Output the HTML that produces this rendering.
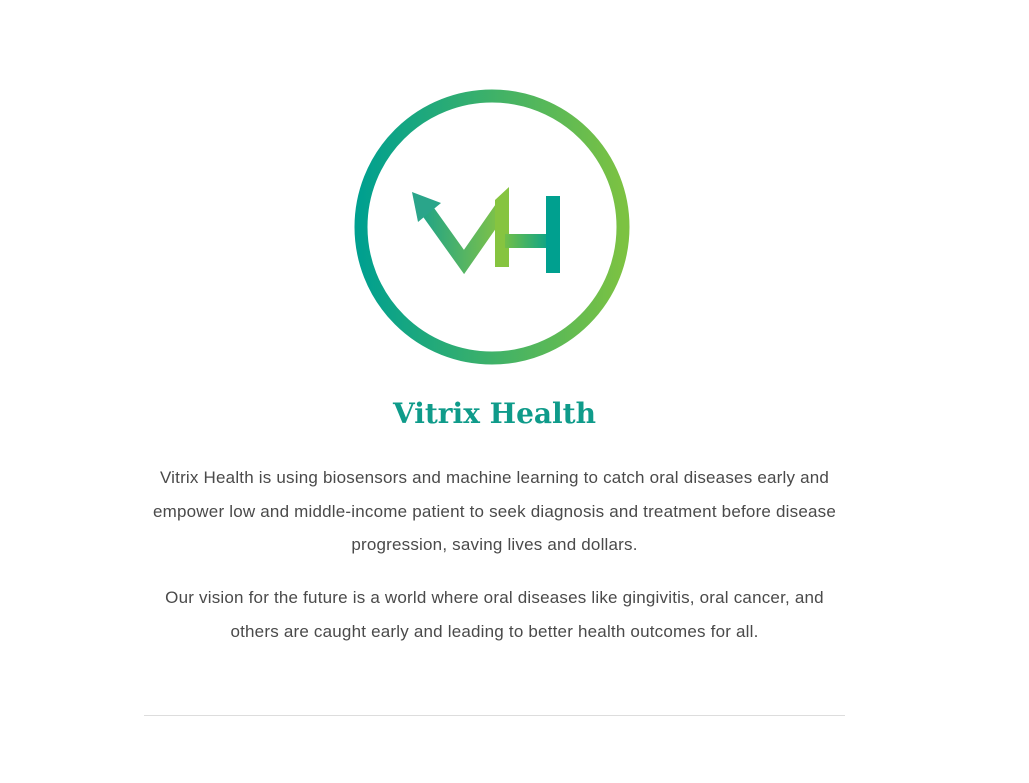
<!DOCTYPE html>
<html><head><style>
body{margin:0;background:#fff;width:1029px;height:783px;overflow:hidden;font-family:"Liberation Sans",sans-serif}
.t{position:absolute;left:0;width:989px;text-align:center;color:#4a4a4a;font-size:17px;letter-spacing:0.2px;line-height:33.5px}
h1{position:absolute;top:397px;left:0;width:989px;text-align:center;margin:0;font-family:"DejaVu Serif","Liberation Serif",serif;font-weight:bold;font-size:28px;letter-spacing:0;color:#0f9b8a}
hr{position:absolute;top:715px;left:144px;width:701px;border:0;border-top:1px solid #ddd;margin:0}
</style></head><body>
<svg width="1029" height="400" style="position:absolute;top:0;left:0">
<defs><linearGradient id="g" x1="0" x2="1"><stop offset="0" stop-color="#00a08f"/><stop offset="1" stop-color="#7cc242"/></linearGradient>
<linearGradient id="g2" x1="412" x2="509" gradientUnits="userSpaceOnUse"><stop offset="0" stop-color="#14a08e"/><stop offset="1" stop-color="#8cc63f"/></linearGradient>
<linearGradient id="g3" x1="500" x2="555" gradientUnits="userSpaceOnUse"><stop offset="0" stop-color="#7cc242"/><stop offset="1" stop-color="#00a08f"/></linearGradient></defs>
<circle cx="492" cy="227" r="131" fill="none" stroke="url(#g)" stroke-width="13"/>
<polyline points="424,206 464,262 503,206" fill="none" stroke="url(#g2)" stroke-width="14" stroke-linejoin="miter"/>
<path d="M412,192 L441,203 L418,222 Z" fill="#2aa58a"/>
<path d="M495,200 L509,187 L509,267 L495,267 Z" fill="#86c440"/>
<rect x="505" y="234" width="45" height="14" fill="url(#g3)"/>
<rect x="546" y="196" width="14" height="77" fill="#00a08f"/>
</svg>
<h1>Vitrix Health</h1>
<div class="t" style="top:461px">Vitrix Health is using biosensors and machine learning to catch oral diseases early and<br>empower low and middle-income patient to seek diagnosis and treatment before disease<br>progression, saving lives and dollars.</div>
<div class="t" style="top:581px">Our vision for the future is a world where oral diseases like gingivitis, oral cancer, and<br>others are caught early and leading to better health outcomes for all.</div>
<hr>
</body></html>
